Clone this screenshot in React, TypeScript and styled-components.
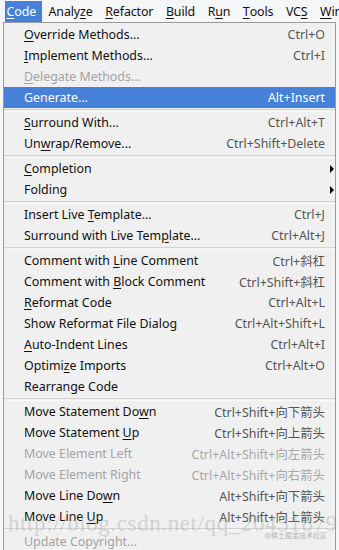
import React from "react";
import styled, { createGlobalStyle } from "styled-components";

const GlobalStyle = createGlobalStyle`
  html, body {
    margin: 0;
    padding: 0;
    background: #f7f7f7;
  }
  body {
    font-family: "Noto Sans", "Noto Sans CJK SC", sans-serif;
    font-size: 12.4px;
    color: #111;
  }
`;

const Frame = styled.div`
  position: relative;
  width: 339px;
  height: 550px;
  overflow: hidden;
  background: #f7f7f7;
`;

const MenuBar = styled.div`
  display: flex;
  align-items: stretch;
  height: 21px;
  padding: 1px 0 0 5px;
  background: #f5f6f7;
  white-space: nowrap;
  letter-spacing: -0.1px;
`;

const BarItem = styled.div<{ $active?: boolean }>`
  display: flex;
  align-items: center;
  padding: 0 6px 0 1.5px;
  margin-right: 5px;
  background: ${(p) => (p.$active ? "#4680d8" : "transparent")};
  color: ${(p) => (p.$active ? "#fff" : "#111")};
`;

const Dropdown = styled.div`
  width: 331px;
  margin-left: 3px;
  border: 1px solid #9a9a9a;
  border-bottom: none;
  background: #f0f0f0;
  padding-top: 1px;
`;

const Row = styled.div<{ $active?: boolean; $disabled?: boolean }>`
  display: grid;
  grid-template-columns: 1fr auto 10px;
  align-items: center;
  height: 21px;
  padding-left: 20px;
  white-space: nowrap;
  background: ${(p) => (p.$active ? "#4680d8" : "transparent")};
  color: ${(p) => (p.$active ? "#fff" : p.$disabled ? "#a3a3a3" : "#111")};
`;

const Shortcut = styled.span<{ $active?: boolean; $disabled?: boolean }>`
  color: ${(p) => (p.$active ? "#fff" : p.$disabled ? "#a8a8a8" : "#555")};
`;

const Arrow = styled.span`
  justify-self: start;
  margin-left: 5px;
  width: 0;
  height: 0;
  border-top: 4px solid transparent;
  border-bottom: 4px solid transparent;
  border-left: 4px solid #000;
`;

const Separator = styled.div`
  box-sizing: border-box;
  height: 3px;
  margin-top: 1px;
  border-top: 1px solid #d2d2d2;
  border-bottom: 1px solid #fafafa;
`;

const Mnemonic = styled.span`
  text-decoration: underline;
  text-underline-offset: 2px;
`;

const Watermark = styled.div`
  position: absolute;
  left: 8px;
  top: 511px;
  font-family: "Liberation Serif", serif;
  font-size: 23px;
  letter-spacing: 0.6px;
  color: rgba(160, 160, 160, 0.4);
  white-space: nowrap;
  pointer-events: none;
`;

const Credit = styled.div`
  position: absolute;
  right: 12px;
  top: 530px;
  font-family: "Noto Sans CJK SC", sans-serif;
  font-size: 7px;
  color: rgba(150, 150, 150, 0.7);
  pointer-events: none;
`;

type Entry =
  | "sep"
  | {
      label: string;
      keys?: string;
      disabled?: boolean;
      active?: boolean;
      submenu?: boolean;
    };

// "&" marks the mnemonic letter
const entries: Entry[] = [
  { label: "&Override Methods...", keys: "Ctrl+O" },
  { label: "&Implement Methods...", keys: "Ctrl+I" },
  { label: "&Delegate Methods...", disabled: true },
  { label: "Generate...", keys: "Alt+Insert", active: true },
  "sep",
  { label: "&Surround With...", keys: "Ctrl+Alt+T" },
  { label: "Un&wrap/Remove...", keys: "Ctrl+Shift+Delete" },
  "sep",
  { label: "&Completion", submenu: true },
  { label: "Folding", submenu: true },
  "sep",
  { label: "Insert Live &Template...", keys: "Ctrl+J" },
  { label: "Surround with Live Tem&plate...", keys: "Ctrl+Alt+J" },
  "sep",
  { label: "Comment with &Line Comment", keys: "Ctrl+斜杠" },
  { label: "Comment with &Block Comment", keys: "Ctrl+Shift+斜杠" },
  { label: "&Reformat Code", keys: "Ctrl+Alt+L" },
  { label: "Show Reformat File Dialog", keys: "Ctrl+Alt+Shift+L" },
  { label: "&Auto-Indent Lines", keys: "Ctrl+Alt+I" },
  { label: "Optimi&ze Imports", keys: "Ctrl+Alt+O" },
  { label: "Rearrange Code" },
  "sep",
  { label: "Move Statement Do&wn", keys: "Ctrl+Shift+向下箭头" },
  { label: "Move Statement &Up", keys: "Ctrl+Shift+向上箭头" },
  { label: "Move Element Left", keys: "Ctrl+Alt+Shift+向左箭头", disabled: true },
  { label: "Move Element Right", keys: "Ctrl+Alt+Shift+向右箭头", disabled: true },
  { label: "Move Line Do&wn", keys: "Alt+Shift+向下箭头" },
  { label: "Move Line &Up", keys: "Alt+Shift+向上箭头" },
  "sep",
  { label: "Update Copyright...", disabled: true },
];

const menus = ["&Code", "Analy&ze", "&Refactor", "&Build", "R&un", "&Tools", "VC&S", "&Window"];

function Label({ text }: { text: string }) {
  const i = text.indexOf("&");
  if (i < 0) return <>{text}</>;
  return (
    <>
      {text.slice(0, i)}
      <Mnemonic>{text[i + 1]}</Mnemonic>
      {text.slice(i + 2)}
    </>
  );
}

export default function App() {
  return (
    <Frame>
      <GlobalStyle />
      <MenuBar>
        {menus.map((m, i) => (
          <BarItem key={m} $active={i === 0}>
            <Label text={m} />
          </BarItem>
        ))}
      </MenuBar>
      <Dropdown>
        {entries.map((e, i) =>
          e === "sep" ? (
            <Separator key={i} />
          ) : (
            <Row key={i} $active={e.active} $disabled={e.disabled}>
              <span>
                <Label text={e.label} />
              </span>
              <Shortcut $active={e.active} $disabled={e.disabled}>
                {e.keys}
              </Shortcut>
              {e.submenu ? <Arrow /> : <span />}
            </Row>
          )
        )}
      </Dropdown>
      <Watermark>http://blog.csdn.net/qq_20451879</Watermark>
      <Credit>@稀土掘金技术社区</Credit>
    </Frame>
  );
}
